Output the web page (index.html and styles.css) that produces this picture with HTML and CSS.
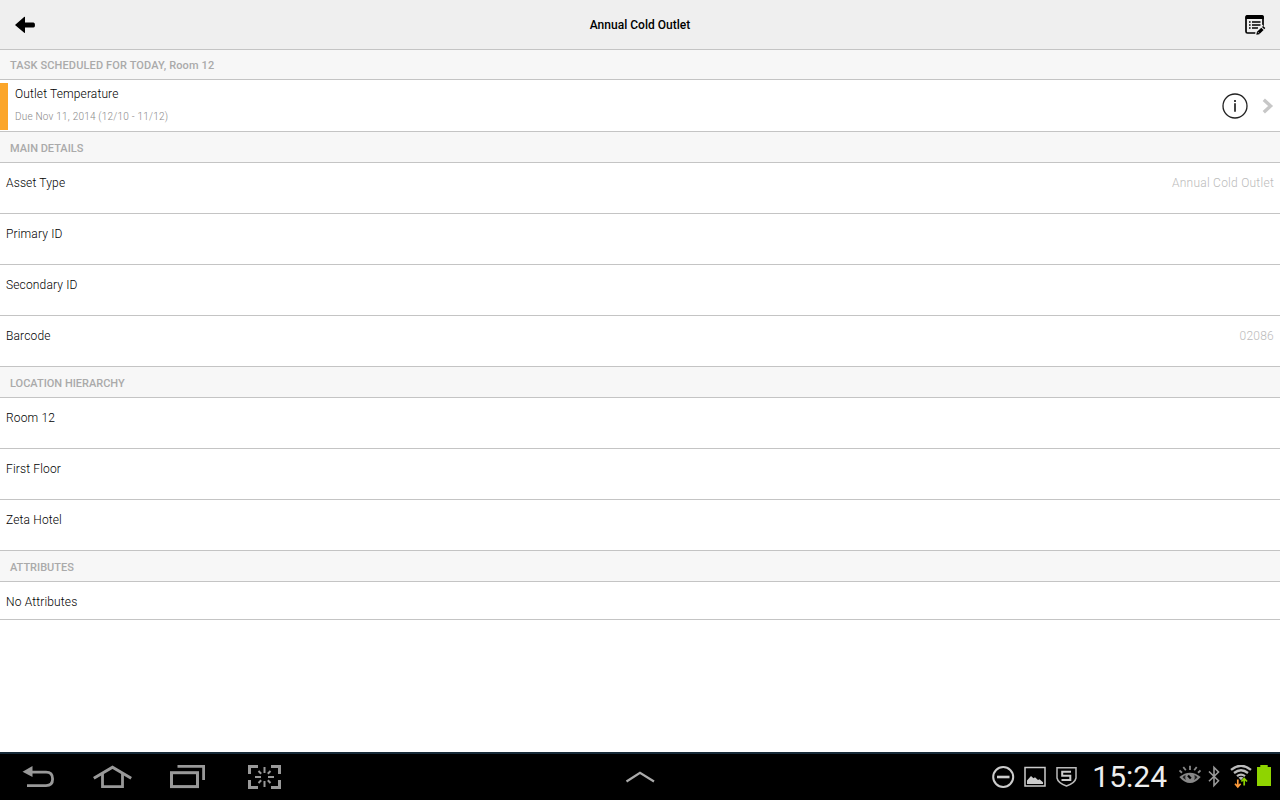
FILE: index.html
```html
<!DOCTYPE html>
<html lang="en">
<head>
  <meta charset="UTF-8">
  <meta name="viewport" content="width=device-width, initial-scale=1.0">
  <title>Annual Cold Outlet</title>
  <link rel="stylesheet" href="styles.css">
</head>
<body>

<header class="header">
  <svg class="back" width="20" height="18" viewBox="0 0 20 18">
    <path d="M0 9 L9.4 0.8 Q10 0.5 10 1.3 V6.5 H18.5 Q20 6.5 20 9 Q20 11.5 18.5 11.5 H10 V16.3 Q10 17.3 9.2 16.7 Z"/>
  </svg>
  <h1>Annual Cold Outlet</h1>
  <svg class="edit" width="21" height="21" viewBox="0 0 21 21">
    <rect x="1" y="1" width="17" height="17" rx="1.5" fill="none" stroke="#000" stroke-width="1.7"/>
    <path d="M0.5 1.5 Q0.5 0 2 0 H17 Q18.8 0 18.8 1.5 V4 H0.5Z"/>
    <path d="M4 7h1.6M7 7h8.5M4 10h1.6M7 10h8.5M4 13h1.6M7 13h6" stroke="#000" stroke-width="1.5"/>
    <path d="M10 21 L10.5 16 L17 9.5 L21 13 L21 21Z" fill="#efefef"/>
    <path d="M11.3 19.8 L12 16.8 L16.3 12.7 L18.6 15 L14.3 19.2Z M17 12 L18.1 11 L20.3 13.1 L19.3 14.2Z"/>
    <path d="M13 17.2l1.2 1.2" stroke="#efefef" stroke-width=".8"/>
  </svg>
</header>

<main>
  <h2 class="section first">TASK SCHEDULED FOR TODAY, Room 12</h2>
  <div class="task">
    <div class="marker"></div>
    <div class="task-text">
      <div class="task-name">Outlet Temperature</div>
      <div class="task-due">Due Nov 11, 2014 (12/10 - 11/12)</div>
    </div>
    <svg class="info" width="26" height="26" viewBox="0 0 26 26">
      <circle cx="13" cy="13" r="12" fill="none" stroke="#222" stroke-width="1.3"/>
      <path d="M13 10.3V18.7M13 7v1.9" stroke="#222" stroke-width="1.7"/>
    </svg>
    <svg class="chevron" width="12" height="16" viewBox="0 0 12 16">
      <path d="M1.8 1.8 L8.6 8 L1.8 14.2" fill="none" stroke="#c7c7c7" stroke-width="3.4"/>
    </svg>
  </div>

  <h2 class="section">MAIN DETAILS</h2>
  <div class="row"><span>Asset Type</span><span class="value">Annual Cold Outlet</span></div>
  <div class="row"><span>Primary ID</span></div>
  <div class="row"><span>Secondary ID</span></div>
  <div class="row"><span>Barcode</span><span class="value">02086</span></div>

  <h2 class="section">LOCATION HIERARCHY</h2>
  <div class="row"><span>Room 12</span></div>
  <div class="row"><span>First Floor</span></div>
  <div class="row"><span>Zeta Hotel</span></div>

  <h2 class="section">ATTRIBUTES</h2>
  <div class="row short"><span>No Attributes</span></div>
</main>

<footer class="navbar">
  <div class="keys">
    <svg width="34" height="24" viewBox="0 0 34 24">
      <path d="M9 7.2 H24 Q30.6 7.2 30.6 14 Q30.6 20.6 24 20.6 H5" fill="none" stroke="#999" stroke-width="2.8"/>
      <path d="M0.5 6.7 L10.5 1 V12Z" fill="#999"/>
    </svg>
    <svg width="40" height="24" viewBox="0 0 40 24">
      <path d="M0.8 13.2 L19.5 2.2 L38.2 13.2" fill="none" stroke="#999" stroke-width="3"/>
      <path d="M9.5 9 V21.6 H29.5 V9" fill="none" stroke="#999" stroke-width="2.8"/>
    </svg>
    <svg width="36" height="24" viewBox="0 0 36 24">
      <path d="M7.5 1.4 H33.6 V15" fill="none" stroke="#999" stroke-width="2.8"/>
      <rect x="1.5" y="7.7" width="26" height="13.9" fill="none" stroke="#999" stroke-width="3"/>
    </svg>
    <svg width="34" height="24" viewBox="0 0 34 24">
      <path d="M1.5 9V1.5H10M23 1.5H31.5V9M31.5 15V22.5H23M10 22.5H1.5V15" fill="none" stroke="#999" stroke-width="3"/>
      <path d="M16.5 2V8M16.5 16V22M7 12H13M20 12H26M10.5 6L13.2 8.7M22.5 6L19.8 8.7M10.5 18L13.2 15.3M22.5 18L19.8 15.3" stroke="#999" stroke-width="2"/>
    </svg>
  </div>

  <svg class="up" width="30" height="12" viewBox="0 0 30 12">
    <path d="M1.5 10.5 L15 1.8 L29 10.5" fill="none" stroke="#aaa" stroke-width="2.2"/>
  </svg>

  <div class="status">
    <svg width="23" height="24" viewBox="0 0 23 24">
      <circle cx="11.2" cy="12" r="10" fill="none" stroke="#ccc" stroke-width="2"/>
      <path d="M5 12H17.5" stroke="#ccc" stroke-width="2.6"/>
    </svg>
    <svg class="picture" width="22" height="24" viewBox="0 0 22 24">
      <rect x="1" y="2.5" width="20" height="18.5" fill="none" stroke="#ccc" stroke-width="1.5"/>
      <path d="M3 19V15.5L7 11L9.5 13.2L11 12.2L14 15L15.5 14.2L19 17.3V19Z" fill="#ccc"/>
    </svg>
    <svg class="shield" width="21" height="24" viewBox="0 0 21 24">
      <path d="M1 2.8H20V13Q19 18 10.5 21Q2 18 1 13Z" fill="none" stroke="#bbb" stroke-width="1.5"/>
      <path d="M15 6.7H6.2V10.8H14.3V15H5.5" fill="none" stroke="#ccc" stroke-width="2"/>
    </svg>
    <span class="clock">15:24</span>
    <svg class="eye" width="22" height="24" viewBox="0 0 22 24">
      <path d="M0.3 12Q11 3.5 21.7 12Q11 24 0.3 12Z" fill="#888"/>
      <path d="M3.5 12.3Q4.5 10.8 6.6 10Q5.8 12.5 7 15Q4.8 14 3.5 12.3ZM18.5 12.3Q17.5 10.8 15.4 10Q16.2 12.5 15 15Q17.2 14 18.5 12.3Z" fill="#222"/>
      <path d="M11.8 13.5L9 10.5" stroke="#000" stroke-width="2.2"/>
      <path d="M11 0.8V5M4.3 2L6.8 5.2M17.7 2L15.2 5.2M0.5 5.5L3 7.7M21.5 5.5L19 7.7" stroke="#888" stroke-width="1.8"/>
    </svg>
    <svg class="bluetooth" width="12" height="24" viewBox="0 0 12 24">
      <path d="M1 6.5L10.5 15.8L6 20.5V2.5L10.5 7L1 16.2" fill="none" stroke="#999" stroke-width="1.6"/>
    </svg>
    <svg class="wifi" width="22" height="24" viewBox="0 0 22 24">
      <path d="M1 4.8Q11 -3.2 21 4.8M4 8Q11 2.4 18 8M7 11.2Q11 8 15 11.2" fill="none" stroke="#bbb" stroke-width="2.3"/>
      <path d="M8.5 12.5Q11 10.8 13.5 12.5L11 15.2Z" fill="#bbb"/>
      <path d="M7.8 14.5V21M5 18.8L7.8 21.9L10.6 18.8" fill="none" stroke="#ff9c3a" stroke-width="1.7"/>
      <path d="M14.2 20.5V14M11.4 16.5L14.2 13.4L17 16.5" fill="none" stroke="#8fd400" stroke-width="1.7"/>
    </svg>
    <svg class="battery" width="14" height="24" viewBox="0 0 14 24">
      <path d="M0 2H3.3V0H10.7V2H14V21H0Z" fill="#8fd400"/>
    </svg>
  </div>
</footer>

</body>
</html>
```
FILE: styles.css
```css
* { box-sizing: border-box; }
body {
  margin: 0; height: 800px; display: flex; flex-direction: column;
  background: #fff; color: #000; font-family: Roboto, sans-serif; font-size: 12px;
  overflow: hidden;
}
svg { display: block; flex: none; }
h1, h2 { margin: 0; }
main { flex: 1; }

.header {
  display: flex; justify-content: space-between; align-items: center;
  height: 50px; padding: 1px 14px 0 15px; background: #efefef; border-bottom: 1px solid #c4c4c4;
}
.header h1 { font-size: 12px; font-weight: 500; letter-spacing: 0.02px; color: #000; }

.section {
  height: 31px; padding: 1px 10px 0; line-height: 31px; background: #f7f7f7;
  border-bottom: 1px solid #c4c4c4; color: #aaa;
  font-size: 11px; font-weight: 500; letter-spacing: 0;
}
.section.first { height: 30px; padding-top: 0; letter-spacing: 0.13px; }

.task {
  display: flex; align-items: center; height: 52px; padding-right: 6px;
  border-bottom: 1px solid #c4c4c4;
}
.marker { width: 8px; height: 47px; margin-top: 2px; background: #fba529; }
.task-text { flex: 1; padding-left: 7px; font-weight: 300; }
.task-name { line-height: 16px; letter-spacing: 0.13px; }
.task-due { margin: 8px 0 1px; line-height: 14px; font-size: 10px; letter-spacing: 0.22px; color: #888; }
.info { margin-right: 14px; }

.row {
  display: flex; justify-content: space-between; height: 51px; padding: 12px 6px 0;
  line-height: 16px; font-weight: 300; letter-spacing: 0.15px; border-bottom: 1px solid #c4c4c4;
}
.row.short { height: 38px; }
.value { color: #bbb; letter-spacing: 0.25px; }

.navbar {
  display: grid; grid-template-columns: 1fr 30px 1fr; align-items: center;
  height: 48px; background: #000; border-top: 2px solid #172a38;
}
.keys { display: flex; padding-left: 22px; gap: 37px; }
.keys svg:last-child { margin-left: 5px; }
.status { display: flex; align-items: center; justify-content: flex-end; padding-right: 9px; }
.picture { margin-left: 9px; }
.shield { margin-left: 10px; }
.clock { margin: 0 12px 0 15px; color: #eee; font-size: 30px; line-height: 46px; }
.bluetooth { margin-left: 7px; }
.wifi { margin-left: 10px; }
.battery { margin-left: 5px; }
```
